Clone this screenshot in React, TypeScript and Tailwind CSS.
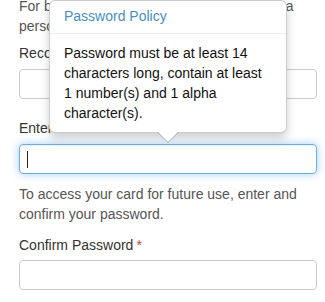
import React from 'react';

const font = { fontFamily: '"Liberation Sans", Arial, sans-serif' };

function Required() {
  return <span className="ml-[3px] text-[#b94a48]">*</span>;
}

function PolicyPopover() {
  return (
    <div className="absolute left-[49px] top-0 z-10 w-[238px] rounded-[6px] border border-[rgba(0,0,0,0.2)] bg-white shadow-[0_5px_10px_rgba(0,0,0,0.2)]">
      <div className="border-b border-[#ebebeb] px-[14px] pb-[7px] pt-[6px] text-[14px] leading-[19px] text-[#4b8fba]">
        Password Policy
      </div>
      <div className="px-[14px] pb-[9px] pt-[9px] text-[14px] leading-[20px] text-[#111]">
        Password must be at least 14 characters long, contain at least 1 number(s) and 1 alpha
        character(s).
      </div>
      {/* arrow */}
      <div className="absolute left-[107px] top-full h-0 w-0 border-x-[11px] border-t-[11px] border-x-transparent border-t-[rgba(0,0,0,0.25)]" />
      <div className="absolute left-[108px] top-full h-0 w-0 border-x-[10px] border-t-[10px] border-x-transparent border-t-white" />
    </div>
  );
}

export default function App() {
  return (
    <div className="relative h-[302px] w-[325px] overflow-hidden bg-white text-[14px] leading-[20px] text-[#333]" style={font}>
      <PolicyPopover />
      <div className="-mt-[4px] pl-[19px] pr-[8px]">
        <p className="text-[#555]">
          For best security, create a password to set a
          <br />
          personal card account.
        </p>

        <label className="mt-[7px] block">Recovery Email</label>
        <input className="mt-[6px] block h-[30px] w-[298px] rounded-[4px] border border-[#ccc] px-[10px] outline-none" />

        <label className="mt-[19px] block">
          Enter Password
          <Required />
        </label>
        <div className="mt-[6px] flex h-[30px] w-[298px] items-center rounded-[4px] border border-[#66afe9] px-[7px] shadow-[inset_0_1px_1px_rgba(0,0,0,0.075),0_0_8px_rgba(102,175,233,0.6)]">
          <span className="block h-[17px] w-px bg-[#222]" />
        </div>

        <p className="mt-[10px] text-[#555]">
          To access your card for future use, enter and confirm your password.
        </p>

        <label className="mt-[11px] block">
          Confirm Password
          <Required />
        </label>
        <input className="mt-[5px] block h-[30px] w-[298px] rounded-[4px] border border-[#ccc] px-[10px] outline-none" />
      </div>
    </div>
  );
}
